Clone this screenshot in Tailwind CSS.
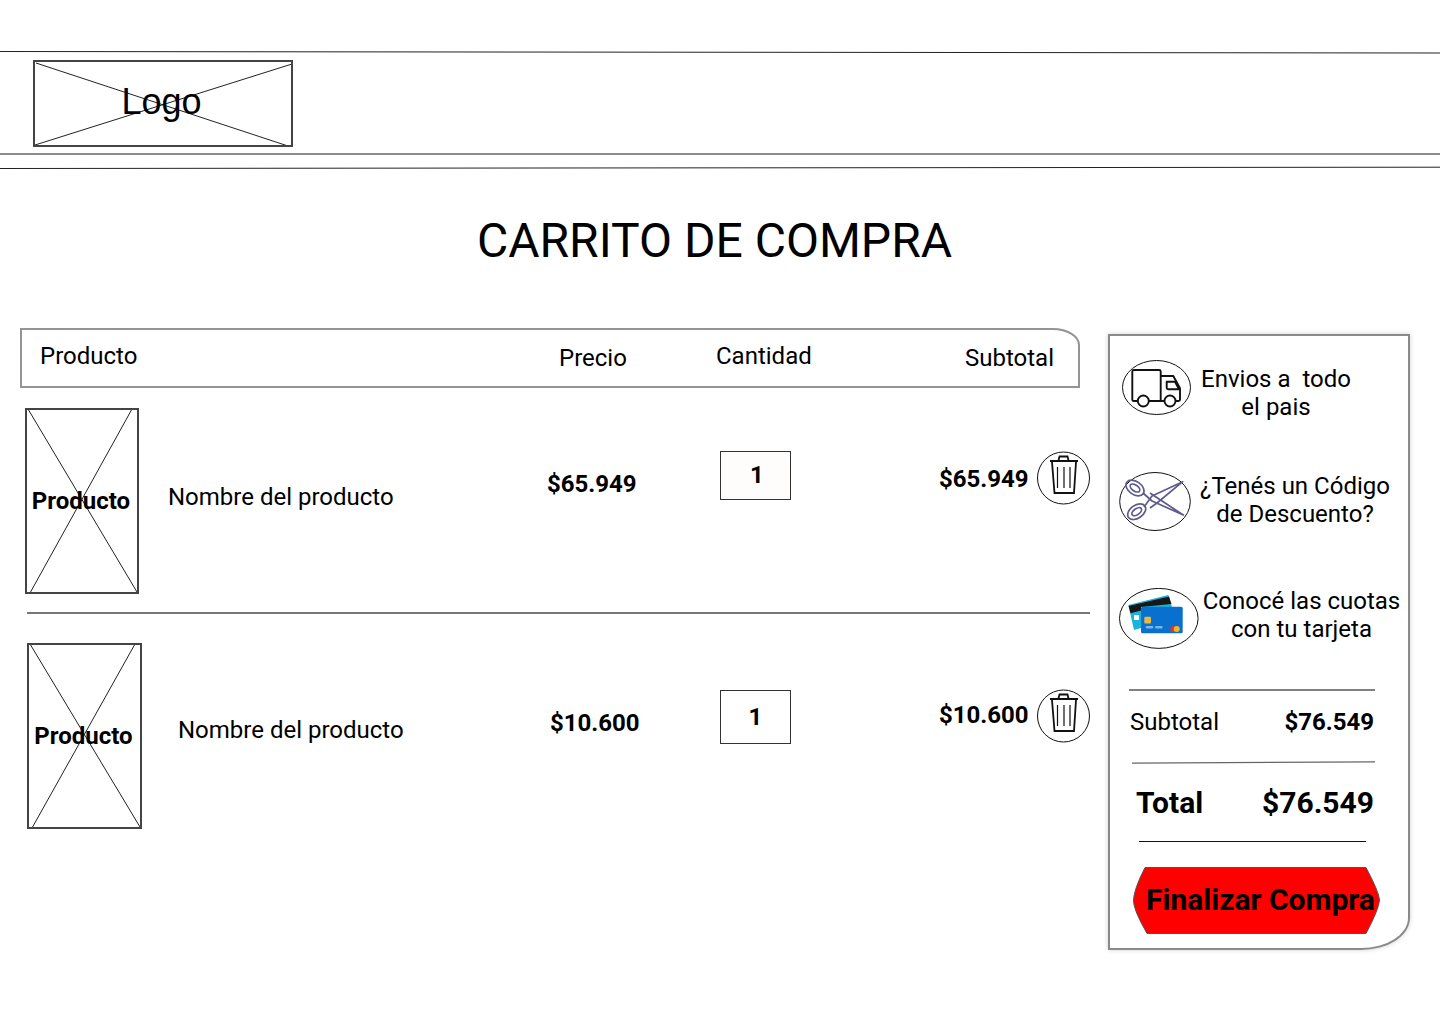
<!DOCTYPE html>
<html lang="es">
<head>
  <meta charset="UTF-8">
  <meta name="viewport" content="width=device-width, initial-scale=1.0">
  <title>Carrito de compra</title>
  <script src="https://cdn.jsdelivr.net/npm/@tailwindcss/browser@4"></script>
</head>
<body class="bg-white text-black font-['Roboto',sans-serif] text-[24px] leading-[28px] h-[1024px] w-[1440px] overflow-hidden">
  <!-- Header -->
  <header class="pt-[50px]">
    <svg class="block w-[1440px] h-[4px]" viewBox="0 0 1440 4"><line x1="0" y1="1.5" x2="1440" y2="3" stroke="#222" stroke-width="1"/></svg>
    <div class="relative ml-[33px] mt-[6px] w-[260px] h-[87px] border-2 border-[#444] flex items-center justify-center">
      <svg class="absolute inset-0 w-full h-full" viewBox="0 0 256 83"><line x1="1" y1="1" x2="253" y2="84" stroke="#222"/><line x1="0" y1="83" x2="257" y2="2" stroke="#222"/></svg>
      <span class="relative font-['Liberation_Sans',sans-serif] text-[36px] leading-[40px] -ml-[3px] -mt-[3px]">Logo</span>
    </div>
    <div class="mt-[6px] h-[2px] bg-[#8c8c8c]"></div>
    <svg class="block mt-[11px] w-[1440px] h-[4px]" viewBox="0 0 1440 4"><line x1="0" y1="2.5" x2="1440" y2="1.2" stroke="#222" stroke-width="1"/></svg>
  </header>

  <h1 class="mt-[43px] ml-[-11px] text-center text-[48px] leading-[56px] font-normal">CARRITO DE COMPRA</h1>

  <main class="mt-[59px] pl-[20px] flex items-start">
    <!-- Cart -->
    <section class="w-[1070px]">
      <div class="w-[1060px] h-[60px] border-2 border-[#949494] rounded-tr-[27px_17px] flex items-start">
        <span class="ml-[18px] w-[518px] mt-[12px]">Producto</span>
        <span class="w-[157px] mt-[14px] ml-[1px]">Precio</span>
        <span class="w-[249px] mt-[12px]">Cantidad</span>
        <span class="mt-[14px]">Subtotal</span>
      </div>

      <div class="mt-[20px] flex items-start">
        <div class="relative ml-[5px] w-[114px] h-[186px] border-2 border-[#444] flex items-center justify-center">
          <svg class="absolute inset-0 w-full h-full" viewBox="0 0 110 182"><line x1="1" y1="-1" x2="110" y2="182" stroke="#222"/><line x1="105" y1="-1" x2="3" y2="183" stroke="#222"/></svg>
          <span class="relative font-bold -ml-[2px]">Producto</span>
        </div>
        <span class="ml-[29px] w-[379px] mt-[75px]">Nombre del producto</span>
        <span class="w-[173px] mt-[62px] font-bold">$65.949</span>
        <div class="w-[71px] h-[49px] mt-[43px] border border-[#333] bg-[#fffdfb] flex items-center justify-center font-bold pl-[3px] pb-[1px]">1</div>
        <span class="ml-[148px] w-[90px] mt-[57px] font-bold">$65.949</span>
        <svg class="ml-[8px] mt-[43px] w-[53px] h-[54px]" viewBox="0 0 53 54" fill="none" stroke="#111">
          <circle cx="26.5" cy="27" r="26"/>
          <g stroke-width="1.8"><path d="M13 10H41M21.5 9.5L22.5 5.5H30.5L31.5 9.5M15 11L17.5 42H37L39 11"/><path d="M20.5 16V37M27 16V37M33 16V37" stroke-width="1.2"/></g>
        </svg>
      </div>

      <div class="ml-[7px] mt-[18px] w-[1063px] h-[1.5px] bg-[#777]"></div>

      <div class="mt-[29px] flex items-start">
        <div class="relative ml-[7px] w-[115px] h-[186px] border-2 border-[#444] flex items-center justify-center">
          <svg class="absolute inset-0 w-full h-full" viewBox="0 0 111 182"><line x1="1" y1="-1" x2="111" y2="182" stroke="#222"/><line x1="106" y1="-1" x2="3" y2="183" stroke="#222"/></svg>
          <span class="relative font-bold -ml-[2px]">Producto</span>
        </div>
        <span class="ml-[36px] w-[372px] mt-[73px]">Nombre del producto</span>
        <span class="w-[170px] mt-[66px] font-bold">$10.600</span>
        <div class="w-[71px] h-[54px] mt-[47px] border border-[#333] bg-white flex items-center justify-center font-bold">1</div>
        <span class="ml-[148px] w-[90px] mt-[58px] font-bold">$10.600</span>
        <svg class="ml-[8px] mt-[46px] w-[53px] h-[54px]" viewBox="0 0 53 54" fill="none" stroke="#111">
          <circle cx="26.5" cy="27" r="26"/>
          <g stroke-width="1.8"><path d="M13 10H41M21.5 9.5L22.5 5.5H30.5L31.5 9.5M15 11L17.5 42H37L39 11"/><path d="M20.5 16V37M27 16V37M33 16V37" stroke-width="1.2"/></g>
        </svg>
      </div>
    </section>

    <!-- Summary -->
    <aside class="ml-[18px] mt-[6px] w-[302px] h-[616px] border-2 border-[#8a8a8a] rounded-br-[49px_32px] shadow-[0_0_5px_rgba(0,0,0,0.18)]">
      <div class="mt-[24px] flex items-start">
        <svg class="ml-[12px] w-[69px] h-[55px] shrink-0" viewBox="0 0 69 55" fill="none" stroke="#111">
          <ellipse cx="34.5" cy="27.5" rx="34" ry="27" stroke-width="1"/>
          <g stroke-width="1.9" stroke-linejoin="round">
            <path d="M16 41H11.5Q10.3 41 10.3 39.5V11.5Q10.3 10 11.8 10H37.2Q38.7 10 38.7 11.5V41H27"/>
            <path d="M38.7 16H51.3L58 28.3V39.5Q58 41 56.5 41H53.5M42.5 41H38.7"/>
            <path d="M44.7 21.7H53L57 29.3H46.2Q44.7 29.3 44.7 27.8Z"/>
            <circle cx="21.3" cy="41" r="5.5"/><circle cx="48" cy="41" r="5.5"/>
          </g>
        </svg>
        <p class="w-[170px] mt-[5px] text-center">Envios a&nbsp; todo<br>el pais</p>
      </div>

      <div class="mt-[51px] flex items-start">
        <svg class="ml-[9px] w-[72px] h-[59px] shrink-0" viewBox="0 0 72 59" fill="none" stroke="#111">
          <ellipse cx="36" cy="29.5" rx="35.3" ry="29" stroke-width="1"/>
          <g stroke="#5f5b8c" stroke-width="1.7" stroke-linejoin="round">
            <ellipse cx="16" cy="16" rx="10" ry="6.5" transform="rotate(35 16 16)"/>
            <ellipse cx="16" cy="16" rx="5.5" ry="3" transform="rotate(35 16 16)"/>
            <ellipse cx="17.7" cy="39.7" rx="10" ry="6.5" transform="rotate(-35 17.7 39.7)"/>
            <ellipse cx="17.7" cy="39.7" rx="5.5" ry="3" transform="rotate(-35 17.7 39.7)"/>
            <path d="M24 21L33 29L64.3 43L37 25L31 21"/>
            <path d="M25 35L33 24L63.7 9.7L38 31L31 36"/>
          </g>
        </svg>
        <p class="w-[208px] text-center">¿Tenés un Código<br>de Descuento?</p>
      </div>

      <div class="mt-[57px] flex items-start">
        <svg class="ml-[9px] w-[80px] h-[61px] shrink-0" viewBox="0 0 80 61">
          <ellipse cx="39.8" cy="30.4" rx="39.3" ry="30" fill="none" stroke="#111" stroke-width="1"/>
          <path d="M9.3 17L49.3 7L53 19H22V40L15 42Z" fill="#19b4dd"/>
          <path d="M9.6 18L50 8.5L52.5 16L22 19V22.5L11.5 25.3Z" fill="#171717"/>
          <rect x="15" y="27" width="5" height="5" fill="#fff"/>
          <rect x="22" y="18.7" width="41.7" height="26.6" rx="1.5" fill="#0a70cf"/>
          <rect x="25.3" y="28.7" width="6.7" height="6.7" rx="1" fill="#e7b93d"/>
          <rect x="26.7" y="38" width="7.6" height="2.4" rx="1.2" fill="#76b6e8"/>
          <rect x="36" y="38" width="7.6" height="2.4" rx="1.2" fill="#76b6e8"/>
          <circle cx="54.3" cy="41" r="3" fill="#e0342c"/>
          <circle cx="57.7" cy="41" r="3" fill="#f7b51f"/>
        </svg>
        <p class="w-[205px] -mt-[1px] text-center whitespace-nowrap">Conocé las cuotas<br>con tu tarjeta</p>
      </div>

      <div class="ml-[19px] mt-[40px] w-[246px] h-[1.5px] bg-[#808080]"></div>
      <div class="ml-[20px] mt-[17px] w-[244px] flex justify-between">
        <span>Subtotal</span><span class="font-bold">$76.549</span>
      </div>
      <svg class="block ml-[22px] mt-[25px] w-[243px] h-[3px]" viewBox="0 0 243 3"><line x1="0" y1="2.2" x2="243" y2="0.8" stroke="#666" stroke-width="1.2"/></svg>
      <div class="ml-[26px] mt-[21px] w-[238px] flex justify-between text-[30px] leading-[36px] font-bold">
        <span>Total</span><span>$76.549</span>
      </div>
      <div class="ml-[29px] mt-[20px] w-[227px] h-px bg-[#111]"></div>
      <button class="relative ml-[23px] mt-[25px] w-[247px] h-[67px] text-left">
        <svg class="absolute inset-0 w-full h-full" viewBox="0 0 247 67"><path d="M12 0.5H233Q246 25 246.5 33Q246 42 233 66.5H14Q0 42 0.5 33Q1 22 12 0.5Z" fill="#ff0000" stroke="#555"/></svg>
        <span class="relative block pl-[13px] text-[30px] leading-[34px] font-bold whitespace-nowrap">Finalizar Compra</span>
      </button>
    </aside>
  </main>
</body>
</html>
